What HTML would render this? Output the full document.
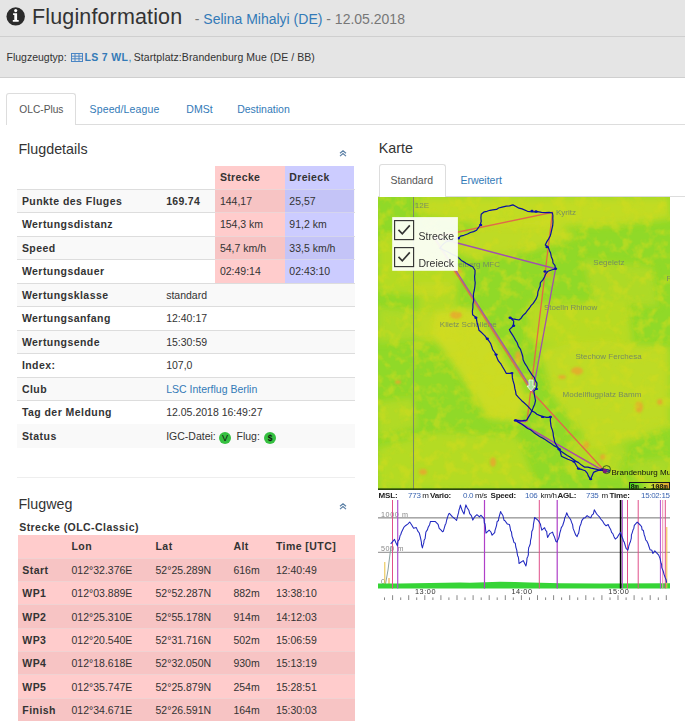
<!DOCTYPE html>
<html><head><meta charset="utf-8">
<style>
html,body{margin:0;padding:0;background:#fff;width:685px;height:728px;overflow:hidden;position:relative;}
body{font-family:"Liberation Sans",sans-serif;}
.t{position:absolute;white-space:nowrap;}
.r{position:absolute;}
</style></head><body>
<div class="r" style="left:0px;top:0px;width:685px;height:78px;background:#e5e5e5;"></div>
<div class="r" style="left:0px;top:36px;width:685px;height:1px;background:#cfcfcf;"></div>
<div class="r" style="left:0px;top:77px;width:685px;height:1px;background:#cfcfcf;"></div>
<svg class="r" style="left:6px;top:7px" width="20" height="20" viewBox="0 0 20 20"><circle cx="9.7" cy="9.4" r="9.2" fill="#2b2b2b"/><circle cx="9.7" cy="3.6" r="1.6" fill="#fff"/><path d="M7.1 6.2H11.1V13.0H12.7V14.8H6.8V13.0H8.3V7.9H7.1Z" fill="#fff"/></svg>
<div class="t" style="left:32.00px;top:7.00px;font-size:21.5px;line-height:21.5px;color:#333;letter-spacing:0.14px;">Fluginformation</div>
<div class="t" style="left:194.80px;top:12.00px;font-size:14px;line-height:14px;color:#777;">- <span style="color:#337ab7">Selina Mihalyi (DE)</span> - 12.05.2018</div>
<div class="t" style="left:6.50px;top:52.00px;font-size:10.5px;line-height:10.5px;color:#333;">Flugzeugtyp:</div>
<svg class="r" style="left:71px;top:53px" width="12" height="9" viewBox="0 0 12 9"><rect x="0.5" y="0.5" width="11" height="8" fill="none" stroke="#4a86c5" stroke-width="1"/><path d="M0 3.2h12M0 5.8h12M4 0v9M8 0v9" stroke="#4a86c5" stroke-width="1"/></svg>
<div class="t" style="left:84.60px;top:52.00px;font-size:10.5px;line-height:10.5px;color:#337ab7;font-weight:bold;letter-spacing:0.3px;">LS 7 WL</div>
<div class="t" style="left:128.50px;top:52.00px;font-size:10.5px;line-height:10.5px;color:#337ab7;">,</div>
<div class="t" style="left:133.80px;top:52.00px;font-size:10.5px;line-height:10.5px;color:#333;letter-spacing:0.07px;">Startplatz:Brandenburg Mue (DE / BB)</div>
<div class="r" style="left:7px;top:124px;width:678px;height:1px;background:#dddddd;"></div>
<div class="r" style="left:6px;top:93px;width:70px;height:32px;background:#fff;border:1px solid #ddd;border-bottom:none;border-radius:3px 3px 0 0;box-sizing:border-box;"></div>
<div class="t" style="left:19.30px;top:105.00px;font-size:10.2px;line-height:10.2px;color:#555;">OLC-Plus</div>
<div class="t" style="left:89.60px;top:104.00px;font-size:10.5px;line-height:10.5px;color:#337ab7;letter-spacing:0.12px;">Speed/League</div>
<div class="t" style="left:186.30px;top:104.00px;font-size:10.5px;line-height:10.5px;color:#337ab7;">DMSt</div>
<div class="t" style="left:237.20px;top:104.00px;font-size:10.5px;line-height:10.5px;color:#337ab7;">Destination</div>
<div class="t" style="left:18.40px;top:142.00px;font-size:14.3px;line-height:14.3px;color:#333;">Flugdetails</div>
<svg class="r" style="left:339.0px;top:149px" width="8" height="8" viewBox="0 0 8 8"><path d="M1 4.3L4 1.7L7 4.3M1 7.1L4 4.5L7 7.1" fill="none" stroke="#5a7fa5" stroke-width="1.2"/></svg>
<div class="r" style="left:215px;top:166px;width:69.6px;height:23px;background:#ffcccc;"></div>
<div class="r" style="left:284.6px;top:166px;width:69.6px;height:23px;background:#ccccff;"></div>
<div class="t" style="left:219.90px;top:172.00px;font-size:10.5px;line-height:10.5px;color:#333;font-weight:bold;letter-spacing:0.35px;">Strecke</div>
<div class="t" style="left:289.30px;top:172.00px;font-size:10.5px;line-height:10.5px;color:#333;font-weight:bold;letter-spacing:0.35px;">Dreieck</div>
<div class="r" style="left:17px;top:189px;width:338px;height:23px;background:#f9f9f9;"></div>
<div class="r" style="left:17px;top:189px;width:338px;height:1px;background:#dddddd;"></div>
<div class="r" style="left:215px;top:190px;width:69.6px;height:22px;background:#f7c4c4;"></div>
<div class="r" style="left:284.6px;top:190px;width:69.6px;height:22px;background:#c4c4f7;"></div>
<div class="r" style="left:215px;top:189px;width:69.6px;height:1px;background:#eed5d5;"></div>
<div class="r" style="left:284.6px;top:189px;width:69.6px;height:1px;background:#d5d5ee;"></div>
<div class="t" style="left:21.90px;top:196.00px;font-size:10.5px;line-height:10.5px;color:#333;font-weight:bold;letter-spacing:0.45px;">Punkte des Fluges</div>
<div class="t" style="left:166.20px;top:196.00px;font-size:10.5px;line-height:10.5px;color:#333;"><b style="letter-spacing:0.3px">169.74</b></div>
<div class="t" style="left:219.90px;top:196.00px;font-size:10.5px;line-height:10.5px;color:#333;">144,17</div>
<div class="t" style="left:289.30px;top:196.00px;font-size:10.5px;line-height:10.5px;color:#333;">25,57</div>
<div class="r" style="left:17px;top:212px;width:338px;height:24px;background:#ffffff;"></div>
<div class="r" style="left:17px;top:212px;width:338px;height:1px;background:#dddddd;"></div>
<div class="r" style="left:215px;top:213px;width:69.6px;height:23px;background:#ffcccc;"></div>
<div class="r" style="left:284.6px;top:213px;width:69.6px;height:23px;background:#ccccff;"></div>
<div class="r" style="left:215px;top:212px;width:69.6px;height:1px;background:#eed5d5;"></div>
<div class="r" style="left:284.6px;top:212px;width:69.6px;height:1px;background:#d5d5ee;"></div>
<div class="t" style="left:21.90px;top:219.00px;font-size:10.5px;line-height:10.5px;color:#333;font-weight:bold;letter-spacing:0.45px;">Wertungsdistanz</div>
<div class="t" style="left:219.90px;top:219.00px;font-size:10.5px;line-height:10.5px;color:#333;">154,3 km</div>
<div class="t" style="left:289.30px;top:219.00px;font-size:10.5px;line-height:10.5px;color:#333;">91,2 km</div>
<div class="r" style="left:17px;top:236px;width:338px;height:23px;background:#f9f9f9;"></div>
<div class="r" style="left:17px;top:236px;width:338px;height:1px;background:#dddddd;"></div>
<div class="r" style="left:215px;top:237px;width:69.6px;height:22px;background:#f7c4c4;"></div>
<div class="r" style="left:284.6px;top:237px;width:69.6px;height:22px;background:#c4c4f7;"></div>
<div class="r" style="left:215px;top:236px;width:69.6px;height:1px;background:#eed5d5;"></div>
<div class="r" style="left:284.6px;top:236px;width:69.6px;height:1px;background:#d5d5ee;"></div>
<div class="t" style="left:21.90px;top:243.00px;font-size:10.5px;line-height:10.5px;color:#333;font-weight:bold;letter-spacing:0.45px;">Speed</div>
<div class="t" style="left:219.90px;top:243.00px;font-size:10.5px;line-height:10.5px;color:#333;">54,7 km/h</div>
<div class="t" style="left:289.30px;top:243.00px;font-size:10.5px;line-height:10.5px;color:#333;">33,5 km/h</div>
<div class="r" style="left:17px;top:259px;width:338px;height:24px;background:#ffffff;"></div>
<div class="r" style="left:17px;top:259px;width:338px;height:1px;background:#dddddd;"></div>
<div class="r" style="left:215px;top:260px;width:69.6px;height:23px;background:#ffcccc;"></div>
<div class="r" style="left:284.6px;top:260px;width:69.6px;height:23px;background:#ccccff;"></div>
<div class="r" style="left:215px;top:259px;width:69.6px;height:1px;background:#eed5d5;"></div>
<div class="r" style="left:284.6px;top:259px;width:69.6px;height:1px;background:#d5d5ee;"></div>
<div class="t" style="left:21.90px;top:266.00px;font-size:10.5px;line-height:10.5px;color:#333;font-weight:bold;letter-spacing:0.45px;">Wertungsdauer</div>
<div class="t" style="left:219.90px;top:266.00px;font-size:10.5px;line-height:10.5px;color:#333;">02:49:14</div>
<div class="t" style="left:289.30px;top:266.00px;font-size:10.5px;line-height:10.5px;color:#333;">02:43:10</div>
<div class="r" style="left:17px;top:283px;width:338px;height:23px;background:#f9f9f9;"></div>
<div class="r" style="left:17px;top:283px;width:338px;height:1px;background:#dddddd;"></div>
<div class="t" style="left:21.90px;top:290.00px;font-size:10.5px;line-height:10.5px;color:#333;font-weight:bold;letter-spacing:0.45px;">Wertungsklasse</div>
<div class="t" style="left:166.20px;top:290.00px;font-size:10.5px;line-height:10.5px;color:#333;">standard</div>
<div class="r" style="left:17px;top:306px;width:338px;height:24px;background:#ffffff;"></div>
<div class="r" style="left:17px;top:306px;width:338px;height:1px;background:#dddddd;"></div>
<div class="t" style="left:21.90px;top:313.00px;font-size:10.5px;line-height:10.5px;color:#333;font-weight:bold;letter-spacing:0.45px;">Wertungsanfang</div>
<div class="t" style="left:166.20px;top:313.00px;font-size:10.5px;line-height:10.5px;color:#333;">12:40:17</div>
<div class="r" style="left:17px;top:330px;width:338px;height:23px;background:#f9f9f9;"></div>
<div class="r" style="left:17px;top:330px;width:338px;height:1px;background:#dddddd;"></div>
<div class="t" style="left:21.90px;top:337.00px;font-size:10.5px;line-height:10.5px;color:#333;font-weight:bold;letter-spacing:0.45px;">Wertungsende</div>
<div class="t" style="left:166.20px;top:337.00px;font-size:10.5px;line-height:10.5px;color:#333;">15:30:59</div>
<div class="r" style="left:17px;top:353px;width:338px;height:24px;background:#ffffff;"></div>
<div class="r" style="left:17px;top:353px;width:338px;height:1px;background:#dddddd;"></div>
<div class="t" style="left:21.90px;top:360.00px;font-size:10.5px;line-height:10.5px;color:#333;font-weight:bold;letter-spacing:0.45px;">Index:</div>
<div class="t" style="left:166.20px;top:360.00px;font-size:10.5px;line-height:10.5px;color:#333;">107,0</div>
<div class="r" style="left:17px;top:377px;width:338px;height:23px;background:#f9f9f9;"></div>
<div class="r" style="left:17px;top:377px;width:338px;height:1px;background:#dddddd;"></div>
<div class="t" style="left:21.90px;top:384.00px;font-size:10.5px;line-height:10.5px;color:#333;font-weight:bold;letter-spacing:0.45px;">Club</div>
<div class="t" style="left:166.20px;top:384.00px;font-size:10.5px;line-height:10.5px;color:#333;"><span style="color:#337ab7">LSC Interflug Berlin</span></div>
<div class="r" style="left:17px;top:400px;width:338px;height:24px;background:#ffffff;"></div>
<div class="r" style="left:17px;top:400px;width:338px;height:1px;background:#dddddd;"></div>
<div class="t" style="left:21.90px;top:407.00px;font-size:10.5px;line-height:10.5px;color:#333;font-weight:bold;letter-spacing:0.45px;">Tag der Meldung</div>
<div class="t" style="left:166.20px;top:407.00px;font-size:10.5px;line-height:10.5px;color:#333;">12.05.2018 16:49:27</div>
<div class="r" style="left:17px;top:424px;width:338px;height:23px;background:#f9f9f9;"></div>
<div class="r" style="left:17px;top:424px;width:338px;height:1px;background:#dddddd;"></div>
<div class="r" style="left:17px;top:424px;width:338px;height:24px;background:#f9f9f9;"></div>
<div class="t" style="left:21.90px;top:431.00px;font-size:10.5px;line-height:10.5px;color:#333;font-weight:bold;letter-spacing:0.45px;">Status</div>
<div class="t" style="left:166.20px;top:431.00px;font-size:10.5px;line-height:10.5px;color:#333;">IGC-Datei:</div>
<div class="r" style="left:219px;top:431.80px;width:12px;height:12px;border-radius:50%;background:#35c040;color:#111;font-size:9px;line-height:12px;text-align:center;">V</div>
<div class="t" style="left:236.50px;top:431.00px;font-size:10.5px;line-height:10.5px;color:#333;">Flug:</div>
<div class="r" style="left:264px;top:431.80px;width:12px;height:12px;border-radius:50%;background:#35c040;color:#111;font-size:8.5px;line-height:12px;text-align:center;font-weight:bold">$</div>
<div class="r" style="left:17px;top:477px;width:338px;height:1px;background:#eeeeee;"></div>
<div class="t" style="left:18.40px;top:497.00px;font-size:14.3px;line-height:14.3px;color:#333;">Flugweg</div>
<svg class="r" style="left:338.5px;top:502px" width="8" height="8" viewBox="0 0 8 8"><path d="M1 4.3L4 1.7L7 4.3M1 7.1L4 4.5L7 7.1" fill="none" stroke="#5a7fa5" stroke-width="1.2"/></svg>
<div class="t" style="left:19.20px;top:522.00px;font-size:10.5px;line-height:10.5px;color:#333;font-weight:bold;letter-spacing:0.45px;">Strecke (OLC-Classic)</div>
<div class="r" style="left:18px;top:535px;width:336.5px;height:23px;background:#ffcccc;"></div>
<div class="t" style="left:71.50px;top:541.00px;font-size:10.5px;line-height:10.5px;color:#333;font-weight:bold;letter-spacing:0.45px;">Lon</div>
<div class="t" style="left:155.50px;top:541.00px;font-size:10.5px;line-height:10.5px;color:#333;font-weight:bold;letter-spacing:0.45px;">Lat</div>
<div class="t" style="left:233.40px;top:541.00px;font-size:10.5px;line-height:10.5px;color:#333;font-weight:bold;letter-spacing:0.45px;">Alt</div>
<div class="t" style="left:275.90px;top:541.00px;font-size:10.5px;line-height:10.5px;color:#333;font-weight:bold;letter-spacing:0.45px;">Time [UTC]</div>
<div class="r" style="left:18px;top:558px;width:336.5px;height:23px;background:#f7c4c4;"></div>
<div class="r" style="left:18px;top:558px;width:336.5px;height:1px;background:#f0d2d2;"></div>
<div class="t" style="left:22.30px;top:565.00px;font-size:10.5px;line-height:10.5px;color:#333;font-weight:bold;letter-spacing:0.45px;">Start</div>
<div class="t" style="left:71.50px;top:565.00px;font-size:10.5px;line-height:10.5px;color:#333;">012°32.376E</div>
<div class="t" style="left:155.50px;top:565.00px;font-size:10.5px;line-height:10.5px;color:#333;">52°25.289N</div>
<div class="t" style="left:233.40px;top:565.00px;font-size:10.5px;line-height:10.5px;color:#333;">616m</div>
<div class="t" style="left:275.90px;top:565.00px;font-size:10.5px;line-height:10.5px;color:#333;">12:40:49</div>
<div class="r" style="left:18px;top:581px;width:336.5px;height:23px;background:#ffcccc;"></div>
<div class="r" style="left:18px;top:581px;width:336.5px;height:1px;background:#f0d2d2;"></div>
<div class="t" style="left:22.30px;top:588.00px;font-size:10.5px;line-height:10.5px;color:#333;font-weight:bold;letter-spacing:0.45px;">WP1</div>
<div class="t" style="left:71.50px;top:588.00px;font-size:10.5px;line-height:10.5px;color:#333;">012°03.889E</div>
<div class="t" style="left:155.50px;top:588.00px;font-size:10.5px;line-height:10.5px;color:#333;">52°52.287N</div>
<div class="t" style="left:233.40px;top:588.00px;font-size:10.5px;line-height:10.5px;color:#333;">882m</div>
<div class="t" style="left:275.90px;top:588.00px;font-size:10.5px;line-height:10.5px;color:#333;">13:38:10</div>
<div class="r" style="left:18px;top:604px;width:336.5px;height:24px;background:#f7c4c4;"></div>
<div class="r" style="left:18px;top:604px;width:336.5px;height:1px;background:#f0d2d2;"></div>
<div class="t" style="left:22.30px;top:612.00px;font-size:10.5px;line-height:10.5px;color:#333;font-weight:bold;letter-spacing:0.45px;">WP2</div>
<div class="t" style="left:71.50px;top:612.00px;font-size:10.5px;line-height:10.5px;color:#333;">012°25.310E</div>
<div class="t" style="left:155.50px;top:612.00px;font-size:10.5px;line-height:10.5px;color:#333;">52°55.178N</div>
<div class="t" style="left:233.40px;top:612.00px;font-size:10.5px;line-height:10.5px;color:#333;">914m</div>
<div class="t" style="left:275.90px;top:612.00px;font-size:10.5px;line-height:10.5px;color:#333;">14:12:03</div>
<div class="r" style="left:18px;top:628px;width:336.5px;height:23px;background:#ffcccc;"></div>
<div class="r" style="left:18px;top:628px;width:336.5px;height:1px;background:#f0d2d2;"></div>
<div class="t" style="left:22.30px;top:635.00px;font-size:10.5px;line-height:10.5px;color:#333;font-weight:bold;letter-spacing:0.45px;">WP3</div>
<div class="t" style="left:71.50px;top:635.00px;font-size:10.5px;line-height:10.5px;color:#333;">012°20.540E</div>
<div class="t" style="left:155.50px;top:635.00px;font-size:10.5px;line-height:10.5px;color:#333;">52°31.716N</div>
<div class="t" style="left:233.40px;top:635.00px;font-size:10.5px;line-height:10.5px;color:#333;">502m</div>
<div class="t" style="left:275.90px;top:635.00px;font-size:10.5px;line-height:10.5px;color:#333;">15:06:59</div>
<div class="r" style="left:18px;top:651px;width:336.5px;height:23px;background:#f7c4c4;"></div>
<div class="r" style="left:18px;top:651px;width:336.5px;height:1px;background:#f0d2d2;"></div>
<div class="t" style="left:22.30px;top:658.00px;font-size:10.5px;line-height:10.5px;color:#333;font-weight:bold;letter-spacing:0.45px;">WP4</div>
<div class="t" style="left:71.50px;top:658.00px;font-size:10.5px;line-height:10.5px;color:#333;">012°18.618E</div>
<div class="t" style="left:155.50px;top:658.00px;font-size:10.5px;line-height:10.5px;color:#333;">52°32.050N</div>
<div class="t" style="left:233.40px;top:658.00px;font-size:10.5px;line-height:10.5px;color:#333;">930m</div>
<div class="t" style="left:275.90px;top:658.00px;font-size:10.5px;line-height:10.5px;color:#333;">15:13:19</div>
<div class="r" style="left:18px;top:674px;width:336.5px;height:24px;background:#ffcccc;"></div>
<div class="r" style="left:18px;top:674px;width:336.5px;height:1px;background:#f0d2d2;"></div>
<div class="t" style="left:22.30px;top:682.00px;font-size:10.5px;line-height:10.5px;color:#333;font-weight:bold;letter-spacing:0.45px;">WP5</div>
<div class="t" style="left:71.50px;top:682.00px;font-size:10.5px;line-height:10.5px;color:#333;">012°35.747E</div>
<div class="t" style="left:155.50px;top:682.00px;font-size:10.5px;line-height:10.5px;color:#333;">52°25.879N</div>
<div class="t" style="left:233.40px;top:682.00px;font-size:10.5px;line-height:10.5px;color:#333;">254m</div>
<div class="t" style="left:275.90px;top:682.00px;font-size:10.5px;line-height:10.5px;color:#333;">15:28:51</div>
<div class="r" style="left:18px;top:698px;width:336.5px;height:23px;background:#f7c4c4;"></div>
<div class="r" style="left:18px;top:698px;width:336.5px;height:1px;background:#f0d2d2;"></div>
<div class="t" style="left:22.30px;top:705.00px;font-size:10.5px;line-height:10.5px;color:#333;font-weight:bold;letter-spacing:0.45px;">Finish</div>
<div class="t" style="left:71.50px;top:705.00px;font-size:10.5px;line-height:10.5px;color:#333;">012°34.671E</div>
<div class="t" style="left:155.50px;top:705.00px;font-size:10.5px;line-height:10.5px;color:#333;">52°26.591N</div>
<div class="t" style="left:233.40px;top:705.00px;font-size:10.5px;line-height:10.5px;color:#333;">164m</div>
<div class="t" style="left:275.90px;top:705.00px;font-size:10.5px;line-height:10.5px;color:#333;">15:30:03</div>
<div class="t" style="left:378.70px;top:141.00px;font-size:14.3px;line-height:14.3px;color:#333;">Karte</div>
<div class="r" style="left:378px;top:196px;width:307px;height:1px;background:#dddddd;"></div>
<div class="r" style="left:378.5px;top:164px;width:67.5px;height:33px;background:#fff;border:1px solid #ddd;border-bottom:none;border-radius:3px 3px 0 0;box-sizing:border-box;"></div>
<div class="t" style="left:390.40px;top:175.00px;font-size:10.5px;line-height:10.5px;color:#555;">Standard</div>
<div class="t" style="left:460.40px;top:175.00px;font-size:10.5px;line-height:10.5px;color:#337ab7;">Erweitert</div>
<svg class="r" style="left:378px;top:197px" width="292" height="293" viewBox="0 0 292 293"><defs><filter id="bl" x="-20%" y="-20%" width="140%" height="140%"><feGaussianBlur stdDeviation="3.5"/></filter><filter id="bl2" x="-50%" y="-50%" width="200%" height="200%"><feGaussianBlur stdDeviation="1.2"/></filter></defs><rect width="292" height="293" fill="#90d928"/><g filter="url(#bl)"><polygon points="40,0 292,0 292,22 240,28 170,30 100,28 40,18" fill="#d2dc22" opacity="0.75"/><polygon points="100,28 170,22 200,40 150,55 90,62 70,50" fill="#d2dc22" opacity="0.7"/><polygon points="205,62 275,70 280,110 215,105" fill="#d2dc22" opacity="0.45"/><polygon points="40,85 80,85 80,146 40,146" fill="#d2dc22" opacity="0.5"/><polygon points="0,40 60,30 85,80 60,100 0,95" fill="#d2dc22" opacity="0.55"/><polygon points="0,110 50,115 60,140 0,146" fill="#d2dc22" opacity="0.45"/><polygon points="55,115 95,110 120,150 150,200 140,225 110,222 80,175 55,140" fill="#d2dc22" opacity="0.9"/><polygon points="0,205 35,200 40,230 0,240" fill="#d2dc22" opacity="0.5"/><polygon points="0,250 60,235 140,240 160,292 0,292" fill="#d2dc22" opacity="0.55"/><polygon points="150,105 250,105 255,145 200,150 150,145" fill="#d2dc22" opacity="0.6"/><polygon points="160,150 230,145 292,150 292,230 250,245 215,250 175,200" fill="#d2dc22" opacity="0.7"/><polygon points="195,240 250,250 240,280 185,272" fill="#d2dc22" opacity="0.5"/><polygon points="250,265 292,260 292,292 260,292" fill="#d2dc22" opacity="0.4"/></g><g filter="url(#bl2)"><ellipse cx="80" cy="75" rx="4" ry="3" fill="#e8a830" opacity="0.85"/><ellipse cx="78" cy="118" rx="6" ry="4" fill="#e8a830" opacity="0.85"/><ellipse cx="140" cy="160" rx="3" ry="6" fill="#e8a830" opacity="0.85"/><ellipse cx="199" cy="174" rx="6" ry="4" fill="#e8a830" opacity="0.85"/><ellipse cx="184" cy="180" rx="4" ry="2" fill="#e8a830" opacity="0.85"/><ellipse cx="261" cy="210" rx="4" ry="6" fill="#e8a830" opacity="0.85"/><ellipse cx="208" cy="248" rx="3" ry="4" fill="#e8a830" opacity="0.85"/><ellipse cx="225" cy="260" rx="3" ry="3" fill="#e8a830" opacity="0.85"/><ellipse cx="45" cy="275" rx="4" ry="3" fill="#e8a830" opacity="0.85"/><ellipse cx="115" cy="265" rx="3" ry="5" fill="#e8a830" opacity="0.85"/><ellipse cx="282" cy="205" rx="3" ry="3" fill="#e8a830" opacity="0.85"/><ellipse cx="20" cy="185" rx="3" ry="2" fill="#e8a830" opacity="0.85"/><ellipse cx="170" cy="78" rx="3" ry="3" fill="#e8a830" opacity="0.85"/></g><filter id="tx" x="0" y="0" width="100%" height="100%" color-interpolation-filters="sRGB"><feTurbulence type="fractalNoise" baseFrequency="0.09" numOctaves="3" seed="7" result="n"/><feColorMatrix in="n" type="matrix" values="0 0 0 0 0.82  0 0 0 0 0.86  0 0 0 0 0.12  3.5 0 0 0 -1.6"/></filter><rect width="292" height="293" filter="url(#tx)" opacity="0.55"/><line x1="35.5" y1="0" x2="35.5" y2="293" stroke="#7c8a66" stroke-width="1"/><text x="36.8" y="10.5" font-family="Liberation Sans" font-size="8" fill="#708468" fill-opacity="0.9">12E</text><text x="178.0" y="17.5" font-family="Liberation Sans" font-size="8" fill="#708468" fill-opacity="0.9">Kyritz</text><text x="215.3" y="68.2" font-family="Liberation Sans" font-size="8" fill="#708468" fill-opacity="0.9">Segeletz</text><text x="288.6" y="84.4" font-family="Liberation Sans" font-size="8" fill="#708468" fill-opacity="0.9">R</text><text x="66.0" y="70.3" font-family="Liberation Sans" font-size="8" fill="#708468" fill-opacity="0.9">Havelberg MFC</text><text x="165.9" y="113.0" font-family="Liberation Sans" font-size="8" fill="#708468" fill-opacity="0.9">Stoelln Rhinow</text><text x="61.8" y="130.0" font-family="Liberation Sans" font-size="8" fill="#708468" fill-opacity="0.9">Klietz Schollene</text><text x="197.4" y="162.0" font-family="Liberation Sans" font-size="8" fill="#708468" fill-opacity="0.9">Stechow Ferchesa</text><text x="184.6" y="200.3" font-family="Liberation Sans" font-size="8" fill="#708468" fill-opacity="0.9">Modellflugplatz Bamm</text><polyline points="56.5,40.0 174.5,15.4 149.0,224.0 137.4,223.4 227.6,275.0" fill="none" stroke="#e06a4a" stroke-width="1.3"/><polyline points="55.0,40.0 153.2,194.0 227.6,275.0" fill="none" stroke="#e06a4a" stroke-width="1.3"/><polyline points="56.5,40.0 177.6,71.8 155.0,194.0 56.5,40.0" fill="none" stroke="#a050b0" stroke-width="1.3"/><polyline points="137.4,223.4 147.9,224.3" fill="none" stroke="#8a3ab0" stroke-width="2"/><polyline points="137.4,223.4 227.6,275.0" fill="none" stroke="#a050b0" stroke-width="1.3"/><polyline points="231.8,275.1 228.7,274.5 225.8,273.4 222.0,273.5 219.1,272.3 216.6,271.8 213.3,271.2 209.9,270.2 206.7,270.2 203.5,268.1 200.6,265.6 197.6,264.1 194.1,261.6 192.0,260.1 189.3,258.5 186.6,256.7 183.7,254.7 181.2,252.9 178.9,250.2 175.5,248.4 173.4,246.7 170.3,244.7 167.4,242.8 164.5,241.1 161.6,239.4 158.6,237.4 155.7,235.4 152.5,232.7 149.6,231.5 146.7,229.2 143.6,227.0 140.7,225.4 137.2,223.0 141.5,223.8 144.6,223.7 148.7,223.1 150.3,220.4 152.6,216.6 154.1,213.4 155.4,210.1 156.7,207.2 157.5,203.7 156.5,198.5 155.9,194.1 158.1,191.8 158.9,188.5 158.9,186.1 157.4,183.6 156.2,180.4 154.0,177.9 152.4,175.4 150.6,172.7 149.2,170.0 147.0,166.7 145.1,162.8 144.8,159.5 143.5,155.4 142.5,152.4 140.4,149.4 139.2,145.8 137.5,143.1 135.8,140.0 134.3,137.7 132.2,134.4 131.4,132.6 135.4,128.7 135.7,124.1 132.0,120.6 134.9,121.8 137.7,122.4 141.0,123.0 143.1,121.2 145.0,118.4 147.7,116.0 149.3,113.7 151.5,111.0 153.0,108.7 155.2,106.4 157.0,103.7 158.3,101.6 159.6,98.3 159.9,94.9 161.0,91.8 162.1,89.2 162.4,85.6 164.7,83.1 166.5,80.0 167.6,77.1 170.0,74.2 173.5,73.0 177.5,71.7 176.9,68.4 175.0,66.0 174.7,62.9 173.3,59.7 172.6,56.0 171.4,53.4 170.2,50.0 167.3,48.1 168.7,44.9 170.5,42.1 172.2,39.0 173.0,36.1 173.7,32.8 174.7,28.5 175.0,24.7 174.8,21.3 174.9,18.5 174.4,15.8 171.1,15.3 167.3,15.7 163.5,15.4 159.5,14.6 156.1,14.9 152.3,14.6 149.5,14.3 144.1,11.9 141.0,11.2 137.6,9.2 134.9,7.9 131.5,8.8 128.3,9.2 124.1,10.2 120.7,11.0 118.5,12.4 114.7,12.8 112.0,13.3 109.0,14.3 106.3,14.8 103.2,17.3 102.9,21.0 103.2,24.4 102.3,27.7 100.4,30.7 98.6,33.2 95.6,34.6 92.4,35.5 89.5,37.0 85.9,38.3 82.5,39.2 80.4,41.4 76.7,42.1 73.6,43.4 70.7,43.9 67.4,45.3 64.3,48.0 61.7,51.3 65.5,53.0 68.9,54.5 72.2,56.1 74.4,57.5 77.2,58.6 80.4,60.4" fill="none" stroke="#0810a0" stroke-width="1.2" stroke-linejoin="round"/><polyline points="80.5,60.6 83.3,63.4 86.1,65.1 88.3,66.5 91.9,68.4 94.8,69.7 97.0,73.3 97.0,76.6 96.6,79.4 96.8,83.1 97.2,85.5 96.9,89.0 96.4,92.5 95.5,96.6 95.4,99.5 95.7,103.6 94.9,107.2 94.9,110.5 94.4,114.2 94.6,117.7 98.3,120.6 98.7,123.6 99.3,126.6 100.3,130.1 101.0,133.3 103.9,135.8 107.0,138.9 109.1,141.8 111.0,144.0 112.7,146.6 113.9,150.0 114.7,152.6 116.5,155.0 117.7,157.2 119.1,161.1 120.4,163.9 123.1,167.2 124.5,169.8 126.6,173.2 128.2,176.3 134.2,176.4 134.4,180.9 135.1,183.9 136.3,187.9 136.8,191.4 137.6,194.3 138.1,197.7 140.5,200.3 143.7,203.7 145.8,205.5 149.2,208.6 151.3,210.9 154.1,214.1 156.6,215.3 158.9,217.2 161.5,218.4 164.9,219.6 168.7,220.3 172.5,220.2 172.3,223.1 172.7,226.7 173.1,229.6 174.4,233.1 175.1,235.8 175.4,239.2 176.1,242.0 176.7,245.0 178.9,249.2 181.6,252.4 182.5,255.7 183.4,259.2 187.1,261.0 189.8,262.3 193.3,263.5 196.2,264.8 198.2,268.3 200.3,271.6 204.2,272.7 207.3,273.8 209.4,276.4 210.5,279.2 212.5,282.3 214.0,278.9 215.5,275.4 218.2,274.1 221.4,273.1 224.0,271.9 228.4,272.7 232.0,273.4" fill="none" stroke="#0810a0" stroke-width="1.2" stroke-linejoin="round"/><ellipse cx="80.4" cy="41.2" rx="1.6" ry="1.2" fill="#0810b0"/><ellipse cx="102.7" cy="28.0" rx="1.6" ry="1.2" fill="#0810b0"/><ellipse cx="154.0" cy="14.0" rx="1.6" ry="1.2" fill="#0810b0"/><ellipse cx="158.0" cy="14.5" rx="1.6" ry="1.2" fill="#0810b0"/><ellipse cx="169.0" cy="50.0" rx="1.6" ry="1.2" fill="#0810b0"/><ellipse cx="177.6" cy="71.8" rx="1.6" ry="1.2" fill="#0810b0"/><ellipse cx="167.0" cy="74.5" rx="1.6" ry="1.2" fill="#0810b0"/><ellipse cx="132.1" cy="120.8" rx="1.6" ry="1.2" fill="#0810b0"/><ellipse cx="135.6" cy="128.7" rx="1.6" ry="1.2" fill="#0810b0"/><ellipse cx="97.9" cy="120.8" rx="1.6" ry="1.2" fill="#0810b0"/><ellipse cx="109.3" cy="141.8" rx="1.6" ry="1.2" fill="#0810b0"/><ellipse cx="118.1" cy="157.6" rx="1.6" ry="1.2" fill="#0810b0"/><ellipse cx="133.9" cy="176.1" rx="1.6" ry="1.2" fill="#0810b0"/><ellipse cx="158.4" cy="191.9" rx="1.6" ry="1.2" fill="#0810b0"/><ellipse cx="164.6" cy="219.9" rx="1.6" ry="1.2" fill="#0810b0"/><ellipse cx="172.4" cy="219.9" rx="1.6" ry="1.2" fill="#0810b0"/><ellipse cx="181.2" cy="252.3" rx="1.6" ry="1.2" fill="#0810b0"/><ellipse cx="200.5" cy="271.6" rx="1.6" ry="1.2" fill="#0810b0"/><ellipse cx="212.7" cy="282.1" rx="1.6" ry="1.2" fill="#0810b0"/><ellipse cx="137.4" cy="223.4" rx="1.6" ry="1.2" fill="#0810b0"/><ellipse cx="196.0" cy="264.6" rx="1.6" ry="1.2" fill="#0810b0"/><circle cx="228.60000000000002" cy="272.6" r="4" fill="none" stroke="#204020" stroke-width="0.8"/><circle cx="227" cy="274" r="2.2" fill="#7a1a7a"/><path d="M151,183 h4 v6 h2 l-4,5 l-4,-5 h2 z" fill="#a8e0a0" stroke="#f4fff0" stroke-width="0.8"/><text x="233.5" y="278" font-family="Liberation Sans" font-size="8" fill="#111">Brandenburg Mue</text><defs><linearGradient id="sg" x1="0" x2="1"><stop offset="0" stop-color="#40d020"/><stop offset="0.5" stop-color="#c0e030"/><stop offset="1" stop-color="#e0a030"/></linearGradient></defs><rect x="251.5" y="285.5" width="40" height="7" fill="url(#sg)" stroke="#1a1a1a" stroke-width="1"/><text x="252.5" y="292" font-family="Liberation Mono" font-size="7.2" font-weight="bold" fill="#111" letter-spacing="-0.2">8m - 108m</text><rect x="0" y="291.4" width="292" height="1.5" fill="#1e3a0c"/><rect x="14.199999999999989" y="20.099999999999994" width="65.7" height="53.7" fill="#fcfff8" fill-opacity="0.94"/><rect x="16.600000000000023" y="23.600000000000005" width="19" height="19" fill="none" stroke="#333" stroke-width="1.15"/><path d="M20.5,32.900000000000006 l3.8,4 l7.5,-8.5" fill="none" stroke="#333" stroke-width="1.6"/><rect x="16.600000000000023" y="50.60000000000001" width="19" height="19" fill="none" stroke="#333" stroke-width="1.15"/><path d="M20.5,59.900000000000006 l3.8,4 l7.5,-8.5" fill="none" stroke="#333" stroke-width="1.6"/><text x="40.5" y="42.69999999999999" font-family="Liberation Sans" font-size="10.5" fill="#333">Strecke</text><text x="40.5" y="69.60000000000002" font-family="Liberation Sans" font-size="10.5" fill="#333">Dreieck</text></svg>
<svg class="r" style="left:378px;top:489px" width="307" height="115" viewBox="0 0 307 115"><text x="0.6" y="8.9" font-family="Liberation Sans" font-size="8" font-weight="bold" fill="#222" letter-spacing="-0.2">MSL:</text><text x="30.1" y="8.9" font-family="Liberation Sans" font-size="8" font-weight="normal" fill="#3a64b0" letter-spacing="-0.3">773</text><text x="44.3" y="8.9" font-family="Liberation Sans" font-size="8" font-weight="normal" fill="#222" letter-spacing="-0.3">m</text><text x="52.0" y="8.9" font-family="Liberation Sans" font-size="8" font-weight="bold" fill="#222" letter-spacing="-0.2">Vario:</text><text x="85.0" y="8.9" font-family="Liberation Sans" font-size="8" font-weight="normal" fill="#3a64b0" letter-spacing="-0.3">0.0</text><text x="97.0" y="8.9" font-family="Liberation Sans" font-size="8" font-weight="normal" fill="#222" letter-spacing="-0.3">m/s</text><text x="112.5" y="8.9" font-family="Liberation Sans" font-size="8" font-weight="bold" fill="#222" letter-spacing="-0.2">Speed:</text><text x="147.0" y="8.9" font-family="Liberation Sans" font-size="8" font-weight="normal" fill="#3a64b0" letter-spacing="-0.3">106</text><text x="162.5" y="8.9" font-family="Liberation Sans" font-size="8" font-weight="normal" fill="#222" letter-spacing="-0.3">km/h</text><text x="179.5" y="8.9" font-family="Liberation Sans" font-size="8" font-weight="bold" fill="#222" letter-spacing="-0.2">AGL:</text><text x="208.0" y="8.9" font-family="Liberation Sans" font-size="8" font-weight="normal" fill="#3a64b0" letter-spacing="-0.3">735</text><text x="223.5" y="8.9" font-family="Liberation Sans" font-size="8" font-weight="normal" fill="#222" letter-spacing="-0.3">m</text><text x="231.5" y="8.9" font-family="Liberation Sans" font-size="8" font-weight="bold" fill="#222" letter-spacing="-0.2">Time:</text><text x="263.0" y="8.9" font-family="Liberation Sans" font-size="8" font-weight="normal" fill="#3a64b0" letter-spacing="-0.3">15:02:15</text><rect x="0" y="28" width="292" height="1.6" fill="#a8a8a8"/><rect x="0" y="62.799999999999955" width="292" height="1" fill="#8a8a8a"/><text x="3" y="28.299999999999955" font-family="Liberation Sans" font-size="7.2" fill="#888" letter-spacing="0.6">1000 m</text><text x="3" y="62.299999999999955" font-family="Liberation Sans" font-size="7.2" fill="#888" letter-spacing="0.6">500 m</text><text x="3" y="94.79999999999995" font-family="Liberation Sans" font-size="7.2" fill="#888" letter-spacing="0.6">0</text><polyline points="7.5,95.0 10.0,81.0 13.0,57.0" fill="none" stroke="#8aa0a0" stroke-width="1"/><rect x="6.300000000000011" y="73" width="1" height="22" fill="#e8c040"/><rect x="10.5" y="89" width="1" height="6" fill="#e8a030"/><polygon points="0.0,94.5 22.0,94.5 52.0,94.0 82.0,93.5 92.0,93.8 107.0,93.2 122.0,92.8 137.0,93.0 152.0,93.5 182.0,94.2 222.0,94.4 292.0,94.2 292.0,99.5 0.0,99.5" fill="#36d436"/><rect x="14.00" y="11" width="1" height="88.5" fill="#e0508a"/><rect x="19.10" y="11" width="1.2" height="88.5" fill="#b050d0"/><rect x="105.90" y="11" width="1.2" height="88.5" fill="#b040c8"/><rect x="160.80" y="11" width="1" height="88.5" fill="#e0508a"/><rect x="178.60" y="11" width="1.2" height="88.5" fill="#b040c8"/><rect x="243.90" y="11" width="1" height="88.5" fill="#b050d0"/><rect x="249.00" y="11" width="1" height="88.5" fill="#e0508a"/><rect x="259.70" y="11" width="1" height="88.5" fill="#e0508a"/><rect x="281.90" y="11" width="1" height="88.5" fill="#b050d0"/><rect x="284.20" y="11" width="1" height="88.5" fill="#f090b0"/><rect x="286.80" y="11" width="1" height="88.5" fill="#e0508a"/><rect x="288.29999999999995" y="38" width="1" height="61" fill="#f0c040"/><rect x="241.79999999999995" y="11" width="1.6" height="88.5" fill="#000"/><polyline points="12.7,54.8 16.5,50.4 17.8,53.5 19.4,56.9 19.9,52.2 21.3,50.4 22.1,46.5 22.8,45.5 23.5,43.2 25.8,38.4 27.1,37.0 30.0,34.8 31.7,33.0 33.4,35.5 35.6,39.2 38.3,38.6 39.8,42.1 41.3,44.0 42.3,47.9 42.7,49.7 43.5,53.9 43.4,55.3 44.4,58.9 45.2,55.7 45.8,53.9 46.1,51.2 47.1,49.4 47.5,46.3 47.9,43.0 49.5,40.6 50.2,38.2 51.6,35.7 52.5,32.4 57.1,32.4 58.6,33.8 60.1,35.3 61.2,39.3 63.4,41.4 64.4,42.8 65.3,42.3 66.4,38.7 67.3,35.5 67.9,34.7 68.7,31.0 69.4,28.7 70.7,24.9 71.4,24.4 74.5,27.9 76.6,29.5 78.6,31.5 78.9,30.0 79.9,25.8 80.5,23.9 81.0,21.0 81.7,19.1 82.4,16.1 83.1,18.3 84.3,21.8 86.0,25.0 86.6,22.6 86.9,20.2 87.9,15.9 88.9,18.2 90.8,21.2 91.7,24.6 93.4,26.6 94.8,31.1 96.6,27.9 98.9,25.7 101.5,27.9 102.8,26.2 106.0,29.6 106.3,33.9 107.0,34.9 107.5,39.0 107.5,39.8 108.0,44.1 111.1,41.1 112.9,43.0 114.1,46.2 116.7,43.6 117.0,41.4 117.9,38.6 118.6,36.1 119.1,32.7 120.5,31.5 120.8,28.9 121.5,26.5 122.6,22.6 123.3,24.0 124.9,26.5 126.0,31.2 127.0,31.7 129.4,35.1 131.4,35.4 132.0,37.9 132.6,41.5 133.5,43.1 134.0,47.1 134.9,49.5 135.9,53.4 137.3,54.3 137.8,58.0 138.9,61.6 138.9,62.7 139.6,66.7 140.3,68.0 140.8,71.3 141.0,74.5 145.2,71.6 146.2,73.6 147.9,77.0 148.3,75.3 148.8,72.1 149.0,69.3 149.9,67.4 150.4,65.5 150.3,62.0 150.8,58.2 151.3,57.5 152.3,54.8 152.5,51.6 153.3,48.3 153.6,45.2 153.8,42.6 154.8,40.5 155.3,37.6 155.4,35.6 156.2,31.1 156.6,28.5 159.9,31.2 160.8,32.3 162.5,35.3 162.8,37.2 163.8,41.2 166.6,38.7 167.6,41.4 168.7,42.4 169.0,45.4 169.6,48.4 171.8,44.6 174.6,43.1 175.5,46.1 176.4,47.8 178.0,52.5 179.1,53.1 179.4,51.8 180.7,49.2 181.3,47.0 181.8,44.2 182.7,41.0 183.3,38.6 184.7,36.5 185.3,34.5 186.3,31.5 186.7,28.8 187.5,27.6 188.7,23.8 190.1,27.0 192.1,29.7 192.7,30.7 193.5,33.2 194.6,35.6 195.1,39.4 196.2,42.1 197.2,44.7 197.8,46.2 199.1,47.6 200.0,45.1 200.6,44.4 201.4,40.1 201.7,37.9 203.0,34.7 203.8,31.6 205.6,29.1 207.0,28.9 209.1,26.6 211.0,28.1 212.8,28.7 213.9,26.1 215.4,24.8 216.3,20.8 218.4,24.6 219.6,26.0 221.4,27.8 222.7,30.0 224.4,31.8 226.4,35.2 228.1,36.8 230.2,35.5 231.2,38.1 232.8,40.8 233.7,43.6 234.7,44.4 236.1,47.9 237.3,50.1 239.1,48.7 240.6,46.1 242.6,43.3 243.5,46.7 244.9,50.0 245.4,51.9 246.2,53.0 247.5,57.5 248.3,59.7 249.8,61.1 250.3,59.9 250.8,57.0 251.7,54.3 252.5,52.5 253.3,49.2 253.4,45.9 254.1,44.1 255.2,40.4 255.8,39.4 256.3,36.4 259.2,33.1 262.2,36.0 263.6,37.6 264.1,40.8 265.4,41.5 266.2,45.7 267.0,47.9 267.7,51.0 268.9,52.2 270.1,54.8 270.8,57.0 272.1,60.8 273.9,61.3 274.9,64.5 276.8,61.9 280.7,66.1 281.2,67.4 282.1,69.6 282.9,73.6 283.6,75.2 283.8,78.6 285.3,82.5 286.1,85.6 287.3,88.8 288.2,91.0 288.6,93.8" fill="none" stroke="#2028c0" stroke-width="1.05" stroke-linejoin="round"/><text x="37" y="105.29999999999995" font-family="Liberation Sans" font-size="7.3" fill="#333" letter-spacing="0.55">13:00</text><text x="133.5" y="105.29999999999995" font-family="Liberation Sans" font-size="7.3" fill="#333" letter-spacing="0.55">14:00</text><text x="230.29999999999995" y="105.29999999999995" font-family="Liberation Sans" font-size="7.3" fill="#333" letter-spacing="0.55">15:00</text><rect x="6.0" y="108.4" width="1" height="2.6" fill="#888"/><rect x="14.1" y="106.2" width="1" height="4.8" fill="#888"/><rect x="22.2" y="108.4" width="1" height="2.6" fill="#888"/><rect x="30.2" y="106.2" width="1" height="4.8" fill="#888"/><rect x="38.2" y="108.4" width="1" height="2.6" fill="#888"/><rect x="46.3" y="106.2" width="1" height="4.8" fill="#888"/><rect x="54.4" y="108.4" width="1" height="2.6" fill="#888"/><rect x="62.4" y="106.2" width="1" height="4.8" fill="#888"/><rect x="70.4" y="108.4" width="1" height="2.6" fill="#888"/><rect x="78.5" y="106.2" width="1" height="4.8" fill="#888"/><rect x="86.5" y="108.4" width="1" height="2.6" fill="#888"/><rect x="94.6" y="106.2" width="1" height="4.8" fill="#888"/><rect x="102.7" y="108.4" width="1" height="2.6" fill="#888"/><rect x="110.7" y="106.2" width="1" height="4.8" fill="#888"/><rect x="118.7" y="108.4" width="1" height="2.6" fill="#888"/><rect x="126.8" y="106.2" width="1" height="4.8" fill="#888"/><rect x="134.8" y="108.4" width="1" height="2.6" fill="#888"/><rect x="142.9" y="106.2" width="1" height="4.8" fill="#888"/><rect x="151.0" y="108.4" width="1" height="2.6" fill="#888"/><rect x="159.0" y="106.2" width="1" height="4.8" fill="#888"/><rect x="167.1" y="108.4" width="1" height="2.6" fill="#888"/><rect x="175.1" y="106.2" width="1" height="4.8" fill="#888"/><rect x="183.1" y="108.4" width="1" height="2.6" fill="#888"/><rect x="191.2" y="106.2" width="1" height="4.8" fill="#888"/><rect x="199.2" y="108.4" width="1" height="2.6" fill="#888"/><rect x="207.3" y="106.2" width="1" height="4.8" fill="#888"/><rect x="215.3" y="108.4" width="1" height="2.6" fill="#888"/><rect x="223.4" y="106.2" width="1" height="4.8" fill="#888"/><rect x="231.5" y="108.4" width="1" height="2.6" fill="#888"/><rect x="239.5" y="106.2" width="1" height="4.8" fill="#888"/><rect x="247.6" y="108.4" width="1" height="2.6" fill="#888"/><rect x="255.6" y="106.2" width="1" height="4.8" fill="#888"/><rect x="263.6" y="108.4" width="1" height="2.6" fill="#888"/><rect x="271.7" y="106.2" width="1" height="4.8" fill="#888"/><rect x="279.8" y="108.4" width="1" height="2.6" fill="#888"/><rect x="287.8" y="106.2" width="1" height="4.8" fill="#888"/></svg>
</body></html>
